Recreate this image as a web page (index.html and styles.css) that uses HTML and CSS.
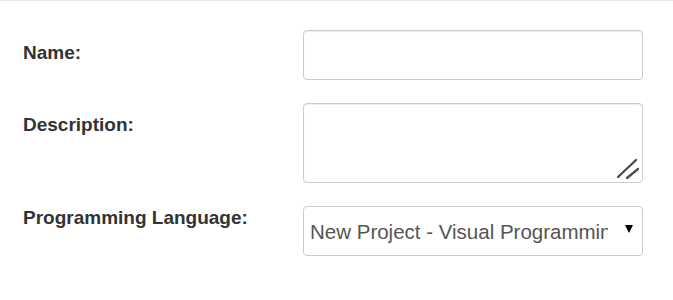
FILE: index.html
```html
<!DOCTYPE html>
<html>
<head>
<meta charset="utf-8">
<link rel="stylesheet" href="styles.css">
</head>
<body>
<div class="page">
  <form class="form">
    <div class="row">
      <label class="label label-name" for="name">Name:</label>
      <input class="control input" id="name" type="text">
    </div>
    <div class="row">
      <label class="label label-desc" for="desc">Description:</label>
      <div class="ta-wrap">
        <textarea class="control textarea" id="desc"></textarea>
        <svg class="grip" width="26" height="24" viewBox="0 0 26 24"><line x1="3" y1="20" x2="21" y2="3" stroke="#4a4a4a" stroke-width="2.3" stroke-linecap="round"/><line x1="12" y1="21" x2="23" y2="12" stroke="#4a4a4a" stroke-width="2.3" stroke-linecap="round"/></svg>
      </div>
    </div>
    <div class="row">
      <label class="label label-lang" for="lang">Programming Language:</label>
      <div class="sel-wrap">
        <select class="control select" id="lang">
          <option>New Project - Visual Programming Language</option>
        </select>
        <svg class="arrow" width="8" height="8" viewBox="0 0 8 8"><polygon points="0,0 8,0 4,8" fill="#000"/></svg>
      </div>
    </div>
  </form>
</div>
</body>
</html>
```

FILE: styles.css
```css
html, body {
  margin: 0;
  padding: 0;
  background: #fff;
}
body {
  font-family: "Liberation Sans", Arial, sans-serif;
  color: #333;
}
.page {
  border-top: 1px solid #e8e8e8;
  padding: 29px 30px 0 23px;
}
.form {
  display: flex;
  flex-direction: column;
  gap: 23px;
}
.row {
  display: flex;
  align-items: flex-start;
}
.label {
  width: 280px;
  flex: none;
  font-size: 19px;
  line-height: 22px;
  font-weight: bold;
  color: #333;
}
.label-name { padding-top: 12px; }
.label-desc { padding-top: 11px; }
.label-lang { padding-top: 1px; }
.control {
  box-sizing: border-box;
  width: 340px;
  border: 1px solid #ccc;
  border-radius: 4px;
  background: #fff;
  box-shadow: inset 0 1px 1px rgba(0,0,0,0.075);
  margin: 0;
  font-family: "Liberation Sans", Arial, sans-serif;
  outline: none;
}
.input {
  height: 50px;
  padding: 0 6px;
}
.ta-wrap, .sel-wrap {
  position: relative;
  width: 340px;
  flex: none;
}
.textarea {
  display: block;
  height: 80px;
  resize: none;
  padding: 6px;
}
.grip {
  position: absolute;
  right: 2px;
  bottom: 2px;
}
.select {
  display: block;
  height: 50px;
  appearance: none;
  -webkit-appearance: none;
  font-size: 20.5px;
  color: #555;
  padding: 0 34px 0 6px;
  box-shadow: none;
}
.arrow {
  position: absolute;
  left: 322px;
  top: 19px;
  pointer-events: none;
}
```
